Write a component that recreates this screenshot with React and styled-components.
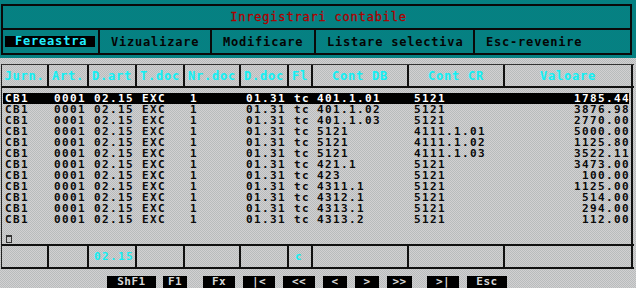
import React from "react";
import styled, { createGlobalStyle } from "styled-components";

const COLS = "47px 40px 48px 48px 56px 48px 24px 96px 96px 128px";

const headers = [
  "Jurn.",
  "Art.",
  "D.art",
  "T.doc",
  "Nr.doc",
  "D.doc",
  "Fl",
  "Cont DB",
  "Cont CR",
  "Valoare",
];

const entries = [
  ["401.1.01", "5121", "1785.44"],
  ["401.1.02", "5121", "3876.98"],
  ["401.1.03", "5121", "2770.00"],
  ["5121", "4111.1.01", "5000.00"],
  ["5121", "4111.1.02", "1125.80"],
  ["5121", "4111.1.03", "3522.11"],
  ["421.1", "5121", "3473.00"],
  ["423", "5121", "100.00"],
  ["4311.1", "5121", "1125.00"],
  ["4312.1", "5121", "514.00"],
  ["4313.1", "5121", "294.00"],
  ["4313.2", "5121", "112.00"],
];

const menu = ["Fereastra", "Vizualizare", "Modificare", "Listare selectiva", "Esc-revenire"];
const menuWidths = "95px 112px 104px 159px 1fr";

const keys = [
  { label: "ShF1", w: 49, gap: 0 },
  { label: "F1", w: 24, gap: 7 },
  { label: "Fx", w: 32, gap: 16 },
  { label: "|<", w: 32, gap: 8 },
  { label: "<<", w: 32, gap: 8 },
  { label: "<", w: 24, gap: 8 },
  { label: ">", w: 24, gap: 8 },
  { label: ">>", w: 25, gap: 8 },
  { label: ">|", w: 32, gap: 15 },
  { label: "Esc", w: 40, gap: 8 },
];

const GlobalStyle = createGlobalStyle`
  html, body {
    margin: 0;
    padding: 0;
  }
  body {
    background: repeating-conic-gradient(#d2d0d2 0 25%, #b8bcbc 0 50%) 0 0 / 2px 2px;
    font-family: "DejaVu Sans Mono", "Liberation Mono", monospace;
    font-size: 11px;
    font-weight: bold;
    letter-spacing: 1.38px;
  }
`;

const Screen = styled.div`
  width: 636px;
  height: 288px;
  overflow: hidden;
`;

const TopPanel = styled.div`
  background: repeating-conic-gradient(#018584 0 25%, #0a7c80 0 50%) 0 0 / 2px 2px;
  height: 58px;
  box-sizing: border-box;
  padding: 4px 2px 0 1px;
`;

const Frame = styled.div`
  border: 2px solid #0a0a0a;
  width: 631px;
  box-sizing: border-box;
`;

const Title = styled.div`
  height: 22px;
  display: flex;
  align-items: center;
  justify-content: center;
  color: #b00000;
  font-size: 12px;
  letter-spacing: 0.8px;
  font-weight: normal;
  -webkit-text-stroke: 0.3px #b00000;
  padding-left: 4px;
`;

const Menu = styled.div`
  display: grid;
  grid-template-columns: ${menuWidths};
  border-top: 2px solid #0a0a0a;
  height: 23px;
`;

const MenuItem = styled.div`
  display: flex;
  align-items: center;
  padding-left: ${(p) => (p.$active ? "2px" : "11px")};
  border-left: ${(p) => (p.$first ? "none" : "2px solid #0a0a0a")};
  color: #050505;
  font-size: 12px;
  letter-spacing: 0.8px;
`;

const Highlight = styled.span`
  display: block;
  width: 90px;
  height: 11px;
  line-height: 11px;
  background: #000;
  color: #22eeff;
  padding-left: 10px;
  box-sizing: border-box;
`;

const Table = styled.div`
  margin-top: 6px;
  margin-left: 1px;
  width: 633px;
`;

const Row = styled.div`
  display: grid;
  grid-template-columns: ${COLS};
  border-left: 1px solid #222;
`;

const HeadRow = styled(Row)`
  height: 24px;
  border-top: 1px solid #333;
  border-bottom: 2px solid #111;
  box-sizing: border-box;
`;

const HeadCell = styled.div`
  display: flex;
  align-items: center;
  justify-content: center;
  color: #14eef2;
  font-size: 12px;
  letter-spacing: 0.8px;
  border-right: 2px solid #111;
  text-shadow: 0 0 1px rgba(120, 255, 255, 0.4);
`;

const Body = styled.div`
  height: 156px;
  box-sizing: border-box;
  padding: 5px 2px 0 1px;
  border-left: 1px solid #222;
  border-right: 2px solid #111;
  width: 632px;
  position: relative;
`;

const DataRow = styled.div`
  display: grid;
  grid-template-columns: 46px 40px 48px 48px 56px 48px 24px 96px 96px 126px;
  height: 11px;
  line-height: 11px;
  background: ${(p) => (p.$selected ? "#000" : "transparent")};
  color: ${(p) => (p.$selected ? "#fff" : "#0a0a0a")};
`;

const DataCell = styled.span`
  padding-left: ${(p) => p.$pad}px;
  text-align: ${(p) => (p.$right ? "right" : "left")};
  padding-right: ${(p) => (p.$right ? "1px" : "0")};
  white-space: nowrap;
  overflow: hidden;
`;

const Cursor = styled.span`
  position: absolute;
  left: 4px;
  bottom: 1px;
  width: 4px;
  height: 5px;
  border: 1px solid #333;
  border-top-width: 2px;
`;

const FootRow = styled(Row)`
  height: 25px;
  border-top: 2px solid #111;
  border-bottom: 2px solid #111;
  box-sizing: border-box;
`;

const FootCell = styled.div`
  display: flex;
  align-items: center;
  padding-left: ${(p) => p.$pad}px;
  color: #14eef2;
  border-right: 2px solid #111;
`;

const Keys = styled.div`
  display: flex;
  margin-top: 7px;
  padding-left: 107px;
`;

const Key = styled.span`
  width: ${(p) => p.$w}px;
  margin-left: ${(p) => p.$gap}px;
  height: 12px;
  line-height: 12px;
  background: #000;
  color: #d8d8d8;
  text-align: center;
  letter-spacing: 0.5px;
`;

const pads = [2, 5, 5, 5, 5, 5, 5, 4, 5, 0];

export default function App() {
  return (
    <Screen>
      <GlobalStyle />
      <TopPanel>
        <Frame>
          <Title>Inregistrari contabile</Title>
          <Menu>
            {menu.map((m, i) => (
              <MenuItem key={m} $first={i === 0} $active={i === 0}>
                {i === 0 ? <Highlight>{m}</Highlight> : m}
              </MenuItem>
            ))}
          </Menu>
        </Frame>
      </TopPanel>
      <Table>
        <HeadRow>
          {headers.map((h) => (
            <HeadCell key={h}>{h}</HeadCell>
          ))}
        </HeadRow>
        <Body>
          {entries.map(([db, cr, val], i) => {
            const cells = ["CB1", "0001", "02.15", "EXC", "1", "01.31", "tc", db, cr, val];
            return (
              <DataRow key={i} $selected={i === 0}>
                {cells.map((c, j) => (
                  <DataCell key={j} $pad={pads[j]} $right={j === 9}>
                    {c}
                  </DataCell>
                ))}
              </DataRow>
            );
          })}
          <Cursor />
        </Body>
        <FootRow>
          {headers.map((h, i) => (
            <FootCell key={h} $pad={i === 2 ? 5 : 6}>
              {i === 2 ? "02.15" : i === 6 ? "c" : ""}
            </FootCell>
          ))}
        </FootRow>
      </Table>
      <Keys>
        {keys.map((k) => (
          <Key key={k.label} $w={k.w} $gap={k.gap}>
            {k.label}
          </Key>
        ))}
      </Keys>
    </Screen>
  );
}
